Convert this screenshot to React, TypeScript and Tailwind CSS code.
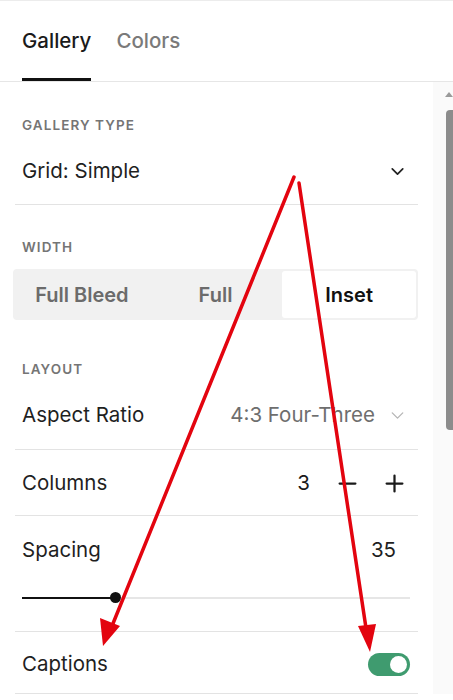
import { ChevronDown, Minus, Plus } from 'lucide-react'

const font = { fontFamily: 'Inter, "Liberation Sans", sans-serif' }

function SectionLabel({ children }: { children: string }) {
  return (
    <div className="px-[7px] text-[13.5px] leading-[18px] font-semibold uppercase tracking-[0.08em] text-[#757575]">
      {children}
    </div>
  )
}

function Arrows() {
  return (
    <svg className="pointer-events-none absolute inset-0" width="453" height="700" viewBox="0 0 453 700">
      <g stroke="#e3040f" strokeWidth="3.5" strokeLinecap="round" fill="none">
        <line x1="294" y1="177" x2="112" y2="626" />
        <line x1="299" y1="183" x2="366" y2="628" />
      </g>
      <g fill="#e3040f">
        <polygon points="103,646 100,618 120,626" />
        <polygon points="370,652 358,626 376,624" />
      </g>
    </svg>
  )
}

export default function App() {
  return (
    <div className="relative h-[700px] w-[453px] overflow-hidden bg-white text-[#1f1f1f]" style={font}>
      <div className="border-t border-[#ececec]" />
      {/* tabs */}
      <div className="flex h-[81px] gap-[25px] border-b border-[#e6e6e6] pl-[22px] pr-[13px]">
        <div className="flex flex-col pt-[26px]">
          <span className="text-[20.5px] leading-[28px] font-medium text-[#1a1a1a]">Gallery</span>
          <span className="mt-[23px] h-[3px] bg-[#111]" />
        </div>
        <div className="pt-[26px]">
          <span className="text-[20.5px] leading-[28px] font-medium text-[#7a7a7a]">Colors</span>
        </div>
      </div>

      <div className="flex">
        <div className="w-[433px] pl-[15px] pr-[15px]">
          <div className="pt-[34px]">
            <SectionLabel>Gallery Type</SectionLabel>
          </div>
          <div className="flex h-[71px] items-center justify-between border-b border-[#e3e3e3] pl-[7px] pr-[10px] pt-[5px]">
            <span className="text-[20.5px]">Grid: Simple</span>
            <ChevronDown size={21} strokeWidth={2} className="text-[#222]" />
          </div>

          <div className="pt-[33px]">
            <SectionLabel>Width</SectionLabel>
          </div>
          <div className="-ml-[2px] mt-[13px] grid h-[51px] grid-cols-3 rounded-[4px] bg-[#f1f1f1] p-[2px] text-[20px] font-semibold text-[#6b6b6b]">
            <span className="flex items-center justify-center">Full Bleed</span>
            <span className="flex items-center justify-center">Full</span>
            <span className="flex items-center justify-center rounded-[3px] bg-white text-[#111]">Inset</span>
          </div>

          <div className="pt-[40px]">
            <SectionLabel>Layout</SectionLabel>
          </div>
          <div className="flex h-[72px] items-center justify-between border-b border-[#e3e3e3] pl-[7px] pr-[10px] pt-[4px]">
            <span className="text-[20.5px]">Aspect Ratio</span>
            <span className="flex items-center gap-[12px] text-[20.5px] text-[#6e6e6e]">
              4:3 Four-Three
              <ChevronDown size={21} strokeWidth={1.5} className="text-[#b5b5b5]" />
            </span>
          </div>
          <div className="flex h-[66px] items-center justify-between border-b border-[#e3e3e3] pl-[7px] pr-[10px] pt-[2px]">
            <span className="text-[20.5px]">Columns</span>
            <span className="flex items-center text-[20.5px] text-[#1a1a1a]">
              <span className="mr-[24px]">3</span>
              <Minus size={27} strokeWidth={2} className="mr-[20px]" />
              <Plus size={27} strokeWidth={2} />
            </span>
          </div>
          <div className="border-b border-[#e3e3e3] pb-[28px] pl-[7px] pr-[8px]">
            <div className="flex h-[66px] items-center justify-between pr-[14px] pt-[2px]">
              <span className="text-[20.5px]">Spacing</span>
              <span className="text-[20.5px]">35</span>
            </div>
            <div className="mt-[10px] flex h-[11px] items-center">
              <span className="h-[2px] w-[93px] bg-[#111]" />
              <span className="-ml-[5px] h-[11px] w-[11px] rounded-full bg-[#111]" />
              <span className="h-[2px] flex-1 bg-[#e6e6e6]" />
            </div>
          </div>
          <div className="flex h-[62px] items-center justify-between border-b border-[#e3e3e3] pl-[7px] pr-[8px] pt-[3px]">
            <span className="text-[20.5px]">Captions</span>
            <span className="flex h-[23px] w-[42px] items-center justify-end rounded-full bg-[#3f9b6f] pr-[3px]">
              <span className="h-[17px] w-[17px] rounded-full bg-white" />
            </span>
          </div>
        </div>

        {/* scrollbar */}
        <div className="flex w-[20px] flex-col items-end bg-[#fafafa]">
          <div className="mt-[10px] h-0 w-0 border-x-[4px] border-b-[5px] border-x-transparent border-b-[#9a9a9a]" />
          <div className="mt-[13px] h-[320px] w-[7px] rounded-l-[4px] bg-[#8c8c8c]" />
        </div>
      </div>

      <Arrows />
    </div>
  )
}
